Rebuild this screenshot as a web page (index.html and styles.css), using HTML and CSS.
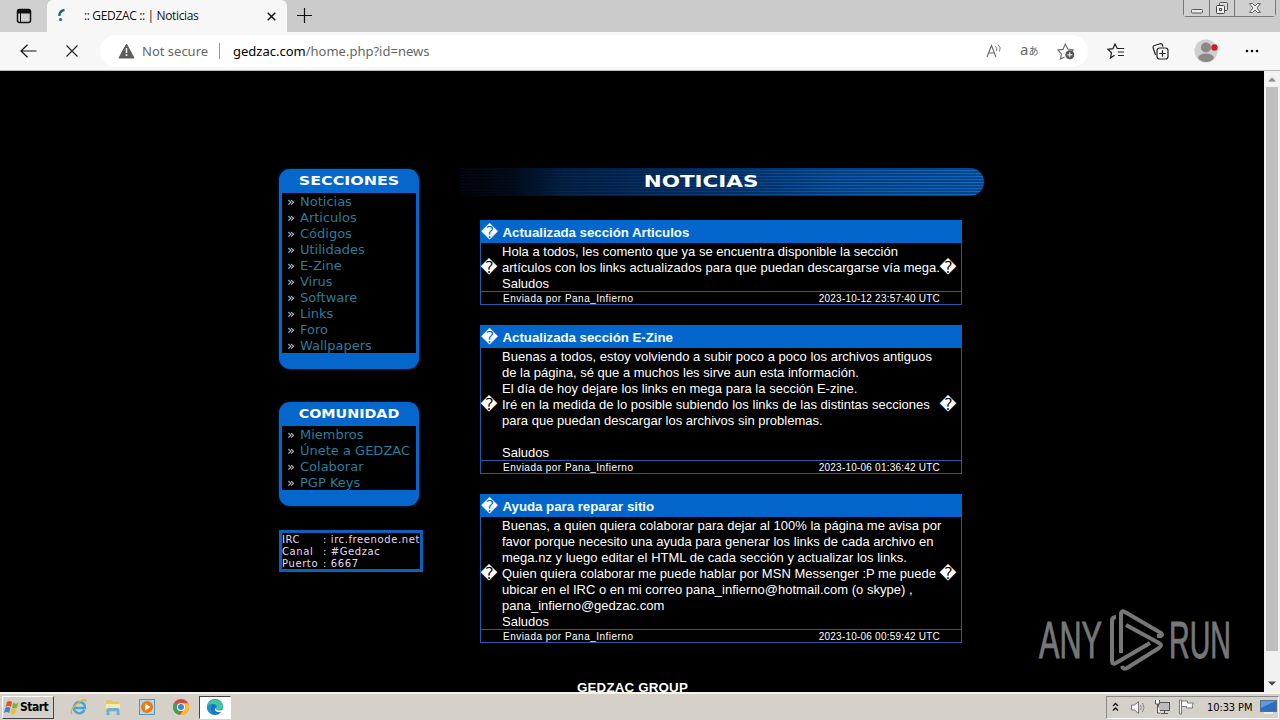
FILE: index.html
```html
<!DOCTYPE html>
<html lang="es">
<head>
<meta charset="utf-8">
<title>:: GEDZAC :: | Noticias</title>
<link rel="stylesheet" href="styles.css">
</head>
<body>
<div class="screen">
  <header class="tabstrip">
    <div class="tab-actions"><svg width="16" height="16" viewBox="0 0 16 16"><rect x="1.5" y="1.5" width="13" height="13" rx="2" fill="none" stroke="#111" stroke-width="1.5"/><path d="M1.5 2h13v3.500h-13z" fill="#111"/><path d="M4.500 5v9" stroke="#111"/></svg></div>
    <div class="tab">
      <svg class="spin" width="10" height="14" viewBox="0 0 10 14"><path d="M7.500 2C4.500 2.500 2.500 4 2.300 8" fill="none" stroke="#1f5f9c" stroke-width="2.400"/><circle cx="3.500" cy="11.500" r="1.600" fill="#2b6da8"/></svg>
      <span class="tab-title">:: GEDZAC :: | Noticias</span>
      <svg class="tab-close" width="9" height="9" viewBox="0 0 9 9"><path d="M.7.700l7.600 7.600M8.300.700L.7 8.300" stroke="#111" stroke-width="1.500"/></svg>
    </div>
    <svg class="new-tab" width="15" height="15" viewBox="0 0 15 15"><path d="M7.500 0v15M0 7.500h15" stroke="#111" stroke-width="1.200"/></svg>
    <div class="window-buttons">
      <span class="wb wb-min"><svg width="14" height="6" viewBox="0 0 14 6"><rect x="1.500" y="1.500" width="11" height="3.500" rx="1" fill="#eee" stroke="#555"/></svg></span>
      <span class="wb wb-max"><svg width="14" height="14" viewBox="0 0 14 14"><rect x="4.500" y="1.500" width="8" height="8" rx="1" fill="#ddd" stroke="#555"/><rect x="1.500" y="4.500" width="8" height="8" rx="1" fill="#eee" stroke="#444"/><rect x="4.500" y="7.500" width="2" height="2" fill="#fff" stroke="#555"/></svg></span>
      <span class="wb wb-close"><svg width="14" height="12" viewBox="0 0 14 12"><path d="M1.500 1.500h3L7 4l2.500-2.500h3L9 6l3.500 4.500h-3L7 8l-2.500 2.500h-3L5 6z" fill="#eee" stroke="#666"/></svg></span>
    </div>
  </header>
  <nav class="toolbar">
    <svg class="back" width="17" height="14" viewBox="0 0 17 14"><path d="M16.500 7H1M7.500.7L1 7l6.500 6.300" fill="none" stroke="#111" stroke-width="1.200"/></svg>
    <svg class="stop" width="12" height="12" viewBox="0 0 12 12"><path d="M.5.500l11 11M11.500.500l-11 11" stroke="#222" stroke-width="1.100"/></svg>
    <div class="address">
      <svg width="17" height="16" viewBox="0 0 17 16"><path d="M8.500 1L16 15H1z" fill="#5d5d5d" stroke="#5d5d5d" stroke-linejoin="round"/><path d="M8.500 5v5M8.500 11.300v1.700" stroke="#fff" stroke-width="1.500"/></svg>
      <span class="insecure">Not secure</span><i class="divider"></i>
      <span class="url"><b>gedzac.com</b>/home.php?id=news</span>
      <svg class="read" width="17" height="16" viewBox="0 0 17 16"><path d="M1 14L5.500 2.500 10 14M2.800 10h5.600" fill="none" stroke="#666" stroke-width="1.100"/><path d="M9.500 3.500q2 2 1 4.500M12 1.500q3.500 3 1.500 7" fill="none" stroke="#777"/></svg>
      <span class="translate">a<small>あ</small></span>
      <svg class="fav" width="18" height="18" viewBox="0 0 18 18"><path d="M7.500 15l-4 2 .9-5.200L1 8l5-.6L8.300 2l2.400 5 5.500.8L14 10" fill="none" stroke="#666" stroke-width="1.100"/><circle cx="12.800" cy="12.800" r="4.500" fill="#555"/><path d="M12.800 10.300v5M10.300 12.800h5" stroke="#fff"/></svg>
    </div>
    <svg class="favs" width="18" height="16" viewBox="0 0 18 16"><path d="M7.500 12.200L3.500 15l1-5.300L1 6.300l5-.7L8 1l2.200 4.500h7M11 9h6M11 12.500h6" fill="none" stroke="#222" stroke-width="1.200"/></svg>
    <svg class="coll" width="17" height="17" viewBox="0 0 17 17"><path d="M3.500 12L1.200 5q-.5-2 1.300-2.500L8 .8q2-.4 2.600 1.400l.4 1.400" fill="none" stroke="#222" stroke-width="1.200"/><rect x="5" y="5" width="11" height="11" rx="2.500" fill="#f7f7f7" stroke="#222" stroke-width="1.200"/><path d="M10.500 7.300v6.400M7.300 10.500h6.400" stroke="#222" stroke-width="1.200"/></svg>
    <svg class="avatar" width="24" height="24" viewBox="0 0 24 24"><circle cx="12" cy="12" r="11.500" fill="#cfcfcd"/><circle cx="12" cy="8.500" r="5" fill="#8b8886"/><path d="M4 19q1-4.500 8-4.500t8 4.500q-3 4-8 4t-8-4z" fill="#8b8886"/><circle cx="20.500" cy="8.500" r="3.200" fill="#d41a22"/></svg>
    <svg class="more" width="14" height="4" viewBox="0 0 14 4"><circle cx="2" cy="2" r="1.300"/><circle cx="7" cy="2" r="1.300"/><circle cx="12" cy="2" r="1.300"/></svg>
  </nav>
  <main class="viewport">
    <div class="page">
      <aside class="sidebar">
        <section class="menu">
          <h2 class="techno">SECCIONES</h2>
          <ul><li><a>Noticias</a></li><li><a>Articulos</a></li><li><a>Códigos</a></li><li><a>Utilidades</a></li><li><a>E-Zine</a></li><li><a>Virus</a></li><li><a>Software</a></li><li><a>Links</a></li><li><a>Foro</a></li><li><a>Wallpapers</a></li></ul>
        </section>
        <section class="menu">
          <h2 class="techno wide">COMUNIDAD</h2>
          <ul><li><a>Miembros</a></li><li><a>Únete a GEDZAC</a></li><li><a>Colaborar</a></li><li><a>PGP Keys</a></li></ul>
        </section>
        <div class="irc"><span>IRC</span><span>: irc.freenode.net</span><span>Canal</span><span>: #Gedzac</span><span>Puerto</span><span>: 6667</span></div>
      </aside>
      <div class="content">
        <h1 class="banner"><span class="techno">NOTICIAS</span></h1>
        <article class="post">
          <h3><i class="mark">�</i><span>Actualizada sección Articulos</span></h3>
          <div class="body"><i class="mark">�</i>
            <p>Hola a todos, les comento que ya se encuentra disponible la sección<br>artículos con los links actualizados para que puedan descargarse vía mega.<br>Saludos</p>
            <i class="mark">�</i></div>
          <footer><span>Enviada por Pana_Infierno</span><time>2023-10-12 23:57:40 UTC</time></footer>
        </article>
        <article class="post">
          <h3><i class="mark">�</i><span>Actualizada sección E-Zine</span></h3>
          <div class="body"><i class="mark">�</i>
            <p>Buenas a todos, estoy volviendo a subir poco a poco los archivos antiguos<br>de la página, sé que a muchos les sirve aun esta información.<br>El día de hoy dejare los links en mega para la sección E-zine.<br>Iré en la medida de lo posible subiendo los links de las distintas secciones<br>para que puedan descargar los archivos sin problemas.<br><br>Saludos</p>
            <i class="mark">�</i></div>
          <footer><span>Enviada por Pana_Infierno</span><time>2023-10-06 01:36:42 UTC</time></footer>
        </article>
        <article class="post">
          <h3><i class="mark">�</i><span>Ayuda para reparar sitio</span></h3>
          <div class="body"><i class="mark">�</i>
            <p>Buenas, a quien quiera colaborar para dejar al 100% la página me avisa por<br>favor porque necesito una ayuda para generar los links de cada archivo en<br>mega.nz y luego editar el HTML de cada sección y actualizar los links.<br>Quien quiera colaborar me puede hablar por MSN Messenger :P me puede<br>ubicar en el IRC o en mi correo pana_infierno@hotmail.com (o skype) ,<br>pana_infierno@gedzac.com<br>Saludos</p>
            <i class="mark">�</i></div>
          <footer><span>Enviada por Pana_Infierno</span><time>2023-10-06 00:59:42 UTC</time></footer>
        </article>
        <div class="group">GEDZAC GROUP</div>
      </div>
    </div>
    <div class="scrollbar"><svg width="8" height="5" viewBox="0 0 8 5"><path d="M0 4.500h8L4 .5z" fill="#8a8a8a"/></svg><i class="thumb"></i><svg width="8" height="5" viewBox="0 0 8 5"><path d="M0 .5h8L4 4.500z" fill="#444"/></svg></div>
    <div class="watermark">
      <span>ANY</span>
      <svg width="56" height="64" viewBox="0 0 56 64"><g fill="none" stroke="#777" stroke-width="4" stroke-linejoin="round"><path d="M7 8Q3 8 3 12V52Q3 56 7 54L41 34"/><path d="M12 44V5Q12 1 16 3L52 24Q54 26 52 27L48 27"/><path d="M17 16L50 34Q54 36 50 39L18 59Q14 61 13 57"/></g></svg>
      <span class="run">RUN</span>
    </div>
  </main>
  <footer class="taskbar">
    <div class="start"><svg width="16" height="15" viewBox="0 0 16 15"><path d="M3 2q2.500-2 5 0L7 7Q4.500 5 1.500 7z" fill="#e0562b"/><path d="M9 2.500q2.500 2 5.500 0L13 7.500q-2.500 2-5 0z" fill="#7fb23a"/><path d="M1.200 8q2.500-2 5.200 0l-1.300 5Q3 11 0 13z" fill="#3e84c8"/><path d="M7.500 8.500q2.500 2 5.300 0l-1.500 5q-2.500 1.500-5 0z" fill="#f1bd2c"/></svg>Start</div>
    <div class="launch">
      <svg width="18" height="18" viewBox="0 0 18 18"><path d="M14.500 12Q12 16 8 15 3 13.500 4 8.500 5.500 4 10 4q5 .5 5 6H5" fill="none" stroke="#48a5d8" stroke-width="2.400"/><path d="M2 16Q-1 12 8 5q9-6 7.500-1" fill="none" stroke="#e2ae37" stroke-width="1.300"/></svg>
      <svg width="18" height="18" viewBox="0 0 18 18"><path d="M2 3q0-1 1-1h4l1 1.500h7V14H2z" fill="#e3c766"/><path d="M2 6h14v5H2z" fill="#f5e9ae"/><path d="M2.500 17v-5q0-2 2-2h9q2 0 2 2v5h-3v-4H5.500v4z" fill="#6fafd6"/></svg>
      <svg width="18" height="18" viewBox="0 0 18 18"><rect x="1.500" y="1.500" width="15" height="15" fill="#b9d5e9" stroke="#5f91b5"/><circle cx="9" cy="9" r="6" fill="#ed7a16"/><path d="M7 5.500v7L12.500 9z" fill="#fff"/></svg>
      <svg width="18" height="18" viewBox="0 0 18 18"><circle cx="9" cy="9" r="8" fill="#d94a3d"/><path d="M2 5l7 4-2 7.700A8 8 0 0 1 2 5z" fill="#3fa551"/><path d="M16 5.200H9L12 11l-4 6a8 8 0 0 0 8-11.800z" fill="#f2c12e"/><circle cx="9" cy="9" r="4" fill="#fff"/><circle cx="9" cy="9" r="3" fill="#4381d9"/></svg>
    </div>
    <div class="active"><svg width="18" height="18" viewBox="0 0 18 18"><circle cx="9" cy="9" r="8" fill="#1675c4"/><path d="M1.500 7A8 8 0 0 1 17 8.500Q17 12 13 12q-3.500 0-2.300-2.500Q11 6 7 6 4 6 1.500 8z" fill="#42c6a0"/><path d="M10.500 9.500q-1.500 3 3 3 2.500 0 3.500-1.500l-1 3q-5 1-7-1.500-.8-2 1.500-3z" fill="#fff"/><path d="M6 7q-3 6 2.500 9.800Q1 16 1 9 3 6 6 7z" fill="#1f8fdc"/></svg></div>
    <div class="tray">
      <svg width="7" height="10" viewBox="0 0 7 10"><path d="M1 4l2.500-2.500L6 4M1 8.500L3.500 6 6 8.500" fill="none" stroke="#111" stroke-width="1.300"/></svg>
      <svg class="vol" width="17" height="15" viewBox="0 0 17 15"><path d="M1.500 5h3L8.500 1.500v12L4.500 10h-3z" fill="#f6f6f6" stroke="#777"/><path d="M10.500 5q1.500 2.500 0 5M12.500 3q3 4.500 0 9" fill="none" stroke="#888"/></svg>
      <svg class="net" width="17" height="16" viewBox="0 0 17 16"><rect x="4.500" y="3.500" width="11" height="8" fill="#bbb" stroke="#555"/><path d="M7 14.500h7M10.500 12v2" stroke="#555"/><path d="M1.500 1v4h4V1M3.500 5v9h3" fill="#fff" stroke="#555"/></svg>
      <svg class="flag" width="17" height="16" viewBox="0 0 17 16"><path d="M1.500 1v14h2V1z" fill="#fff" stroke="#777"/><path d="M3.500 2h6v2h6q-2 2-1 5H8.500V7.500h-5z" fill="#fff" stroke="#777"/></svg>
      <span class="clock">10:33 PM</span>
      <svg class="desk" width="17" height="14" viewBox="0 0 17 14"><rect x=".5" y=".5" width="16" height="11" fill="#2c6dc0" stroke="#587090"/><path d="M1 1h15L1 8z" fill="#5b9ae0"/><path d="M4 13h9" stroke="#eee" stroke-width="2"/></svg>
    </div>
  </footer>
</div>
</body>
</html>
```
FILE: styles.css
```css
* { box-sizing: border-box; }
body { margin: 0; background: #000; font-family: "Liberation Sans", Arial, sans-serif; }
h1, h2, h3, p, ul { margin: 0; padding: 0; }
svg { display: block; flex: none; }
i { font-style: normal; }
.screen { width: 1280px; height: 720px; overflow: hidden; display: flex; flex-direction: column; }

.tabstrip { height: 32px; flex: none; background: #cbcbcb; display: flex; align-items: flex-start; font-family: "Open Sans", "Noto Sans", sans-serif; }
.tab-actions { width: 47px; height: 32px; padding: 8px 0 0 16px; background: #d0d0d0; }
.tab { width: 240px; height: 32px; background: #f7f7f7; border-radius: 6px 6px 0 0; display: flex; align-items: center; padding: 0 11px 0 10px; }
.spin { margin-top: -3px; }
.tab-title { font-size: 12px; margin-left: 17px; margin-top: -1px; letter-spacing: -.35px; color: #111; flex: 1; white-space: nowrap; }
.new-tab { margin: 8px 0 0 10px; }
.window-buttons { margin-left: auto; margin-right: 4px; width: 93px; height: 17px; display: flex; border: 1px solid #777; border-top: 0; border-radius: 0 0 4px 4px; }
.wb { display: flex; justify-content: center; align-items: center; background: #d0d0d0; }
.wb-min { width: 25px; padding-top: 5px; }
.wb-max { width: 26px; border-left: 1px solid #777; border-right: 1px solid #777; }
.wb-close { flex: 1; }

.toolbar { height: 39px; flex: none; background: #f7f7f7; border-bottom: 1px solid #bbb; display: flex; align-items: center; padding-left: 20px; font-family: "Noto Sans", "Open Sans", sans-serif; }
.stop { margin-left: 29px; }
.address { width: 988px; height: 32px; margin-left: 22px; border-radius: 16px; background: #fff; display: flex; align-items: center; padding-left: 18px; font-size: 13px; color: #666; white-space: nowrap; }
.insecure { width: 67px; margin-left: 7px; }
.divider { width: 1px; height: 16px; background: #999; margin: 0 13px 0 10px; }
.url b { font-weight: 400; color: #000; }
.read { margin-left: auto; }
.translate { font: 15px/20px "Noto Sans", "Noto Sans CJK JP", sans-serif; margin: -3px 0 0 17px; width: 20px; }
.translate small { font-size: 10px; }
.fav { margin: 0 13px 0 17px; }
.favs { margin-left: 19px; }
.coll { margin-left: 27px; }
.avatar { margin-left: 25px; }
.more { margin-left: 27px; }

.viewport { height: 621px; flex: none; background: #000; position: relative; display: flex; overflow: hidden; }
.page { width: 1264px; display: flex; align-items: flex-start; padding: 97px 0 0 279px; }
.sidebar { width: 144px; padding-top: 1px; flex: none; }
.menu { width: 140px; margin-bottom: 33px; padding: 0 3px 16px; background: #0566cb; border-radius: 11px; box-shadow: 0 0 3px #023269; }
.techno { font-family: "DejaVu Sans", sans-serif; font-weight: 700; color: #fff; }
.menu h2 { height: 24px; line-height: 24px; font-size: 13px; text-align: center; transform: scaleX(1.22); }
.menu h2.wide { transform: scaleX(1.1); }
.menu ul { list-style: none; background: #000; font: 13px/16px "DejaVu Sans", sans-serif; padding: 1px 0 0 5px; white-space: nowrap; }
.menu li { display: flex; height: 16px; color: #ccc; }
.menu li:last-child { height: 15px; }
.menu li::before { content: "»"; width: 13px; }
.menu a { color: #2a7d9b; }
.irc { margin-top: -9px; width: 144px; height: 42px; border: 3px solid #0b62b8; color: #e0dcf8; font: 10px/12px "DejaVu Sans", sans-serif; letter-spacing: .6px; display: grid; grid-template-columns: 41px 100px; padding-top: 1px; grid-auto-rows: 12px; white-space: nowrap; }

.content { width: 524px; margin-left: 37px; display: flex; flex-direction: column; }
.banner { height: 28px; margin-bottom: 24px; border-radius: 0 14px 14px 0; display: flex; justify-content: center; line-height: 29px; padding-right: 41px; background: repeating-linear-gradient(#00102a66 0 2px, #0000 2px 3px), linear-gradient(90deg, #000 1%, #010a14 10%, #03254c 20%, #043c7c 48%, #075cb2 72%, #0a6ac8); }
.banner .techno { font-size: 15px; transform: scaleX(1.43); }
.post { width: 482px; margin: 0 0 20px 20px; border: 1px solid #1d5dab; border-top: 0; color: #fff; }
.post h3 { height: 23px; margin: 0 -1px; background: #0366cc; font-size: 13.3px; display: flex; align-items: center; padding: 2px 0 0 1px; color: #f4ffff; }
.mark { width: 17px; flex: none; font: 16.5px/16px "DejaVu Sans", sans-serif; color: #fff; }
.body .mark { padding-top: 2px; }
.post h3 span { margin-left: 4.500px; letter-spacing: -.04px; }
.body { display: flex; align-items: center; }
.body p { width: 438px; flex: none; margin: 1px 1px -1px 4px; font-size: 13px; line-height: 16px; letter-spacing: .01px; white-space: nowrap; }
.body .mark:first-child { margin-left: -.5px; margin-right: .5px; }
.body p + .mark { margin-left: -1.500px; }
.post footer { height: 14px; margin-bottom: -1px; border-top: 1px solid #1d5dab; display: flex; justify-content: space-between; padding: 0 21px 0 22px; font-size: 10px; line-height: 14px; letter-spacing: .22px; }
.post footer span { letter-spacing: .48px; }
.group { margin-left: 117px; margin-top: 17px; font-size: 13.3px; font-weight: 700; color: #fff; line-height: 16px; letter-spacing: .2px; }

.scrollbar { width: 16px; background: #f1f1f1; display: flex; flex-direction: column; align-items: center; padding: 6px 0; }
.thumb { width: 12px; height: 564px; margin: 5px 0 auto; background: #bfbfbf; }
.watermark { position: absolute; left: 1039px; top: 538px; display: flex; align-items: center; color: #777; font-size: 51px; line-height: 64px; -webkit-text-stroke: 1px #777; }
.watermark span { width: 62px; transform: scaleX(.6); transform-origin: 0 50%; }
.watermark .run { transform: scaleX(.56); }
.watermark svg { margin: 0 4px 0 8px; }

.taskbar { height: 28px; flex: none; background: #d5d1c9; border-top: 2px solid #f5f3ee; display: flex; align-items: center; padding-left: 2px; }
.start { width: 52px; height: 23px; border: 1px solid; border-color: #fff #444 #444 #fff; display: flex; align-items: center; font: 700 12px "DejaVu Sans Condensed", "DejaVu Sans", sans-serif; letter-spacing: -.5px; padding-left: 1px; }
.launch { display: flex; gap: 16px; margin-left: 16px; }
.active { width: 32px; height: 23px; margin-left: 9px; background: #fff; border: 1px solid; border-color: #444 #fff #fff #444; display: flex; justify-content: center; align-items: center; }
.tray { margin-left: auto; width: 173px; height: 23px; border: 1px solid; border-color: #888 #fff #fff #888; display: flex; align-items: center; padding-left: 5px; margin-right: 1px; }
.vol { margin-left: 11px; }
.net { margin-left: 7px; }
.flag { margin-left: 7px; }
.clock { font: 11px "DejaVu Sans Condensed", "DejaVu Sans", sans-serif; margin-left: 12px; width: 46px; white-space: nowrap; letter-spacing: -.1px; }
.desk { margin-left: 7px; }
```
